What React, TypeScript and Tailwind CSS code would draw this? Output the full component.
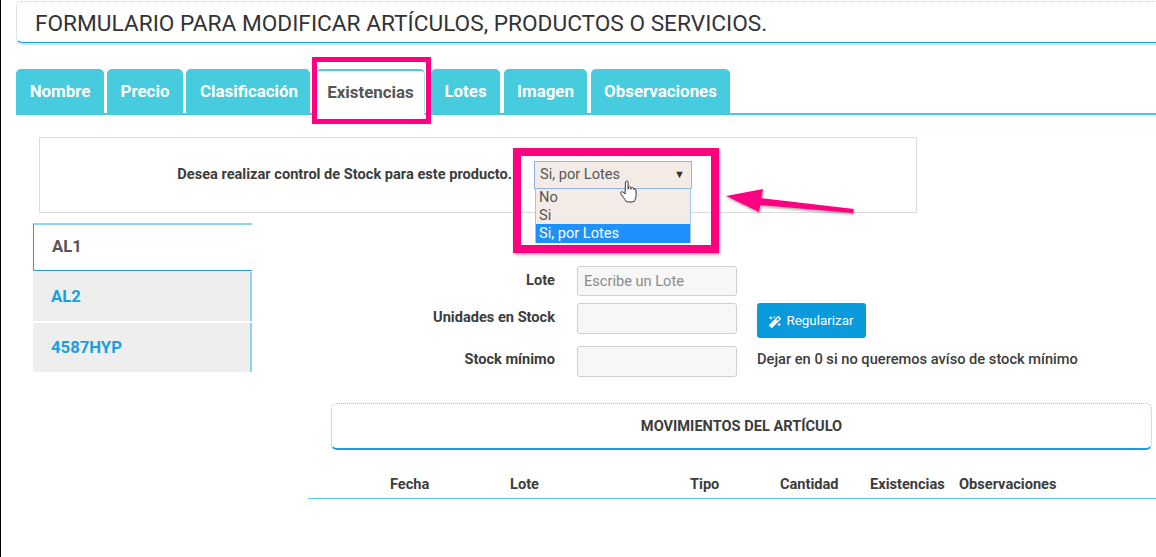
import React from "react";
import { FaMagic } from "react-icons/fa";

const tabs = [
  { label: "Nombre", w: "w-[88px]", ml: "ml-0" },
  { label: "Precio", w: "w-[76px]", ml: "ml-[3px]" },
  { label: "Clasificación", w: "w-[124px] pl-[2px]", ml: "ml-[3px]" },
];
const tabsRight = [
  { label: "Lotes", w: "w-[69px]", ml: "ml-[6px]" },
  { label: "Imagen", w: "w-[83px]", ml: "ml-[4px]" },
  { label: "Observaciones", w: "w-[139px]", ml: "ml-[4px]" },
];

function Tab({ label, w, ml }: { label: string; w: string; ml: string }) {
  return (
    <div className={`${w} ${ml} h-[44px] pt-[2px] rounded-t-[5px] bg-[#47cbde] flex items-center justify-center text-white font-bold text-[16.9px]`}>
      {label}
    </div>
  );
}

function Row({ label, children, h, mt, lh }: { label: string; children?: React.ReactNode; h: string; mt: string; lh: string }) {
  return (
    <div className={`flex ${mt}`}>
      <div className={`w-[303px] text-right text-[14.6px] font-bold text-[#3c3c3c] ${lh}`}>{label}</div>
      <div className={`ml-[22px] w-[160px] ${h} rounded-[3px] border border-[#cfcfcf] bg-[#f7f7f7] shrink-0`} />
      {children}
    </div>
  );
}

export default function App() {
  return (
    <div className="relative w-[1156px] h-[557px] overflow-hidden bg-white border-l border-l-black font-['Roboto',sans-serif] text-[#3c3c3c]">
      {/* title */}
      <div className="ml-[15px] mt-px w-[1160px] h-[42px] rounded-l-[6px] border border-dotted border-[#9fd8ee] border-b-[#16a3e0] [border-bottom-style:solid] shadow-[0_2px_0_0_#cdeaf6] flex items-center pl-[18px] pt-[4px]">
        <span className="text-[22.66px] leading-none text-[#333]">FORMULARIO PARA MODIFICAR ARTÍCULOS, PRODUCTOS O SERVICIOS.</span>
      </div>

      {/* tabs */}
      <div className="mt-[26px] ml-[15px] h-[46px] flex items-start border-b-2 border-b-[#47cbde]">
        {tabs.map((t) => <Tab key={t.label} {...t} />)}
        <div className="ml-[6px] w-[109px] h-[46px] rounded-t-[5px] border-x border-t-2 border-x-[#a8e4ee] border-t-[#47cbde] bg-white flex items-center justify-center text-[#555] font-bold text-[16.9px]">
          Existencias
        </div>
        {tabsRight.map((t) => <Tab key={t.label} {...t} />)}
      </div>

      {/* stock panel */}
      <div className="ml-[38px] mt-[22px] w-[878px] h-[76px] border border-[#dcdcdc] flex items-start">
        <div className="w-[472px] mt-[27px] text-right text-[14.6px] leading-[18px] font-bold text-[#3c3c3c] whitespace-nowrap">
          Desea realizar control de Stock para este producto.
        </div>
        <div className="ml-[22px] mt-[23px] w-[158px] h-[28px] border border-[#8fb4e6] bg-[#f4ebe6] flex items-center justify-between pl-[5px] pr-[6px] text-[14.6px] text-[#555]">
          <span className="-mt-px">Si, por Lotes</span>
          <span className="text-[11px] text-[#333]">▼</span>
        </div>
      </div>

      {/* body */}
      <div className="flex mt-[10px]">
        <div className="ml-[32px] w-[219px] shrink-0 text-[16.7px] font-bold">
          <div className="h-[48px] pb-[2px] border-l border-t-2 border-b border-l-[#16a3e0] border-t-[#8ed3f2] border-b-[#16a3e0] flex items-center pl-[18px] text-[#555]">AL1</div>
          <div className="mt-px h-[49px] bg-[#eeeeee] border-r-2 border-r-[#8ed3f2] flex items-center pl-[18px] text-[#16a0e0]">AL2</div>
          <div className="mt-[2px] h-[49px] bg-[#eeeeee] border-r-2 border-r-[#8ed3f2] flex items-center pl-[18px] text-[#16a0e0]">4587HYP</div>
        </div>
        <div className="flex-1">
          <div className="mt-[43px]">
            <Row label="Lote" h="h-[30px]" mt="mt-0" lh="leading-[28px]">
            </Row>
            <Row label="Unidades en Stock" h="h-[31px]" mt="mt-[7px]" lh="leading-[28px]">
              <div className="ml-[20px] w-[109px] h-[35px] pt-[2px] rounded-[3px] bg-[#0a9bdc] text-white text-[13.4px] flex items-center justify-center gap-[5px]">
                <FaMagic className="text-[12px]" />
                <span>Regularizar</span>
              </div>
            </Row>
            <Row label="Stock mínimo" h="h-[31px]" mt="mt-[8px]" lh="leading-[26px]">
              <div className="ml-[20px] text-[14.65px] font-medium leading-[27px] whitespace-nowrap text-[#3c3c3c]">
                Dejar en 0 si no queremos avíso de stock mínimo
              </div>
            </Row>
          </div>
          <div className="ml-[79px] mt-[26px] w-[821px] h-[47px] pt-px rounded-[6px] border border-dotted border-[#7fd0ee] border-b-2 border-b-[#1c9fd8] [border-bottom-style:solid] flex items-center justify-center text-[14.6px] font-bold text-[#3c3c3c]">
            MOVIMIENTOS DEL ARTÍCULO
          </div>
          <div className="ml-[56px] mt-[20px] h-[29px] border-b border-b-[#55d0e4] flex text-[14.6px] font-bold leading-[28px] text-[#3c3c3c]">
            <span className="ml-[82px] w-[120px]">Fecha</span>
            <span className="w-[180px]">Lote</span>
            <span className="w-[90px]">Tipo</span>
            <span className="w-[90px]">Cantidad</span>
            <span className="w-[89px]">Existencias</span>
            <span>Observaciones</span>
          </div>
        </div>
      </div>

      {/* annotations and open dropdown */}
      <div className="absolute left-[534px] top-[189px] w-[156px] h-[54px] border-x border-[#a9c4ea] bg-[#f4ebe6] text-[14.6px] leading-[18px] text-[#555]">
        <div className="pl-[3px] h-[17px] leading-[16px]">No</div>
        <div className="pl-[3px]">Si</div>
        <div className="pl-[3px] h-[19px] bg-[#1e90ff] text-white">Si, por Lotes</div>
      </div>
      <input
        placeholder="Escribe un Lote"
        readOnly
        className="absolute left-[576px] top-[266px] w-[160px] h-[30px] px-[7px] bg-transparent text-[14.6px] placeholder:text-[#8a8a8a] outline-none"
      />
      <div className="absolute left-[311px] top-[57px] w-[119px] h-[67px] border-[5px] border-[#ff0080]" />
      <div className="absolute left-[512px] top-[148px] w-[206px] h-[105px] border-[8px] border-[#ff0080] shadow-[1px_2px_3px_rgba(0,0,0,0.3)]" />
      <svg className="absolute left-[720px] top-[185px] drop-shadow-[1px_2px_1px_rgba(0,0,0,0.3)]" width="140" height="34" viewBox="0 0 140 34">
        <polygon points="5,11 42,4 38,27 39,13 133,24 132,28 39,20 38,27" fill="#ff0080" />
      </svg>
      <svg className="absolute left-[619px] top-[180px]" width="20" height="24" viewBox="0 0 20 24">
        <path
          d="M5.5 2.2c0-1.6 2.6-1.6 2.6 0v7l.2-1.6c.2-1.4 2.4-1.3 2.5.1l.1 1.6.2-1c.3-1.3 2.3-1.1 2.4.2l.1 1.1c.3-1.1 2.3-.9 2.4.4l.1 4.8c.1 3-1.3 5.2-1.8 6.6-2.6.9-6 .9-8.2 0-1-2-4.6-6.2-5.2-7.6-.7-1.7 1-2.7 2.2-1.7l2 1.9z"
          fill="#fff"
          stroke="#333"
          strokeWidth="1"
          strokeLinejoin="round"
        />
      </svg>
    </div>
  );
}
